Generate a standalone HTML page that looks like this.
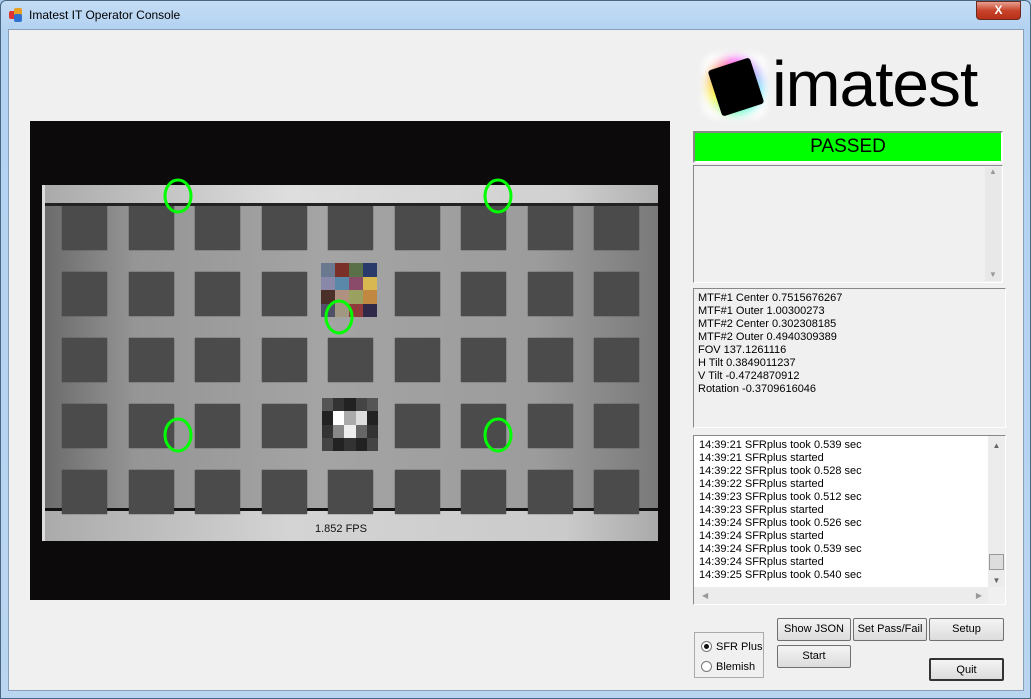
<!DOCTYPE html>
<html><head><meta charset="utf-8"><style>
*{box-sizing:border-box;margin:0;padding:0}
body{width:1031px;height:699px;overflow:hidden;background:#a9c9ea;font-family:"Liberation Sans",sans-serif;font-size:11px;position:relative}
.abs{position:absolute}
#frame{left:0;top:0;width:1031px;height:699px;border:1px solid #4a6680;border-radius:6px 6px 0 0;background:linear-gradient(#c4dcf4,#b2d2f2 30px,#b9d5f0)}
#client{left:8px;top:29px;width:1016px;height:662px;background:#f0f0f0;border:1px solid #8aa0b8}
.btn{position:absolute;background:linear-gradient(#f4f4f4,#dcdcdc);border:1px solid #707070;border-radius:2px;font-size:11px;text-align:center;line-height:21px;color:#000;white-space:nowrap}
.sq{background:#4b4b4b;width:45px;height:44px;box-shadow:0 0 1px #333}
.ln{height:13px;line-height:13px}
</style></head><body>
<div id="frame" class="abs"></div>
<div class="abs" style="left:9px;top:8px;width:14px;height:14px">
<div class="abs" style="left:0;top:3px;width:8px;height:8px;background:#d33;border-radius:2px"></div>
<div class="abs" style="left:5px;top:0;width:8px;height:8px;background:#e8a020;border-radius:2px"></div>
<div class="abs" style="left:5px;top:6px;width:8px;height:8px;background:#3070d0;border-radius:2px"></div></div>
<div class="abs" style="left:29px;top:8px;font-size:12px;color:#000">Imatest IT Operator Console</div>
<div class="abs" style="left:976px;top:1px;width:45px;height:19px;background:linear-gradient(#e8a090,#c8432a 50%,#b83018);border:1px solid #6a2a20;border-radius:0 0 4px 4px;color:#fff;font-weight:bold;text-align:center;line-height:17px;font-size:12px">X</div>
<div id="client" class="abs"></div>

<!-- camera image -->
<div class="abs" style="left:30px;top:121px;width:640px;height:479px;background:#0c0a0a;overflow:hidden">
 <div class="abs" style="left:12px;top:64px;width:616px;height:356px;background:linear-gradient(90deg,#6a6a6a,#959595 15%,#a4a4a4 45%,#9c9c9c 80%,#7a7a7a)"></div>
 <div class="abs" style="left:12px;top:64px;width:616px;height:20px;background:linear-gradient(90deg,#aaa,#dedede 40%,#d0d0d0 85%,#b0b0b0)"></div>
 <div class="abs" style="left:12px;top:82px;width:616px;height:3px;background:#222"></div>
 <div class="abs" style="left:12px;top:387px;width:616px;height:3px;background:#111"></div>
 <div class="abs" style="left:12px;top:390px;width:616px;height:30px;background:linear-gradient(90deg,#aaa,#d4d4d4 40%,#cacaca 85%,#aaa)"></div>
 <div class="abs" style="left:12px;top:64px;width:3px;height:356px;background:#ddd"></div>
 <div class="abs" style="left:32px;top:85px;display:grid;grid-template-columns:repeat(9,45px);grid-template-rows:repeat(5,44px);column-gap:21.5px;row-gap:22px">
  <div class="sq"></div><div class="sq"></div><div class="sq"></div><div class="sq"></div><div class="sq"></div><div class="sq"></div><div class="sq"></div><div class="sq"></div><div class="sq"></div>
  <div class="sq"></div><div class="sq"></div><div class="sq"></div><div class="sq"></div><div class="sq" style="background:none;box-shadow:none"></div><div class="sq"></div><div class="sq"></div><div class="sq"></div><div class="sq"></div>
  <div class="sq"></div><div class="sq"></div><div class="sq"></div><div class="sq"></div><div class="sq"></div><div class="sq"></div><div class="sq"></div><div class="sq"></div><div class="sq"></div>
  <div class="sq"></div><div class="sq"></div><div class="sq"></div><div class="sq"></div><div class="sq" style="background:none;box-shadow:none"></div><div class="sq"></div><div class="sq"></div><div class="sq"></div><div class="sq"></div>
  <div class="sq"></div><div class="sq"></div><div class="sq"></div><div class="sq"></div><div class="sq"></div><div class="sq"></div><div class="sq"></div><div class="sq"></div><div class="sq"></div>
 </div>
 <div class="abs" style="left:291px;top:142px;width:56px;height:54px;display:grid;grid-template-columns:repeat(4,1fr);grid-template-rows:repeat(4,1fr)">
  <div style="background:#6a7890"></div><div style="background:#7a3028"></div><div style="background:#5a7048"></div><div style="background:#2a3a6a"></div>
  <div style="background:#8a88a8"></div><div style="background:#5a88a8"></div><div style="background:#8a4a6a"></div><div style="background:#d8b850"></div>
  <div style="background:#4a3028"></div><div style="background:#b09080"></div><div style="background:#9aa060"></div><div style="background:#c08840"></div>
  <div style="background:#505068"></div><div style="background:#a09880"></div><div style="background:#903a3a"></div><div style="background:#302a48"></div>
 </div>
 <div class="abs" style="left:292px;top:277px;width:56px;height:53px;background:#222;display:grid;grid-template-columns:repeat(5,1fr);grid-template-rows:repeat(4,1fr)">
  <div style="background:#555"></div><div style="background:#333"></div><div style="background:#222"></div><div style="background:#444"></div><div style="background:#555"></div>
  <div style="background:#222"></div><div style="background:#fff"></div><div style="background:#aaa"></div><div style="background:#ddd"></div><div style="background:#222"></div>
  <div style="background:#333"></div><div style="background:#888"></div><div style="background:#eee"></div><div style="background:#666"></div><div style="background:#333"></div>
  <div style="background:#444"></div><div style="background:#222"></div><div style="background:#333"></div><div style="background:#222"></div><div style="background:#444"></div>
 </div>
 <svg class="abs" style="left:0;top:0" width="640" height="479"><g fill="none" stroke="#00ff00" stroke-width="3">
  <ellipse cx="148" cy="75" rx="13" ry="16"/><ellipse cx="468" cy="75" rx="13" ry="16"/><ellipse cx="309" cy="196" rx="13" ry="16"/><ellipse cx="148" cy="314" rx="13" ry="16"/><ellipse cx="468" cy="314" rx="13" ry="16"/></g></svg>
 <div class="abs" style="left:285px;top:402px;font-size:11px;color:#111">1.852 FPS</div>
</div>

<!-- logo -->
<div class="abs" style="left:702px;top:53px;width:66px;height:66px;border-radius:14px;background:radial-gradient(circle,#fff0 40%,#fff 72%),conic-gradient(#f0f,#88f,#0ff,#0f8,#ff0,#f80,#f0f);filter:blur(3px);opacity:.8"></div>
<div class="abs" style="left:714px;top:63px;width:44px;height:48px;background:#000;transform:rotate(-18deg);border-radius:3px"></div>
<div class="abs" style="left:772px;top:46px;font-size:64px;line-height:76px;color:#000;letter-spacing:-1px;transform:scaleX(1.03);transform-origin:left">imatest</div>

<div class="abs" style="left:693px;top:131px;width:310px;height:32px;border:2px solid #888;border-right-color:#fff;border-bottom-color:#fff;background:#00ff00;font-size:19px;text-align:center;line-height:28px">PASSED</div>
<div class="abs" style="left:693px;top:165px;width:310px;height:118px;border:1px solid #888;border-right-color:#fff;border-bottom-color:#fff;background:#f0f0f0"><div class="abs" style="right:1px;top:1px;width:16px;height:114px;background:#e8e8e8;color:#999;font-size:8px;text-align:center">▲<div style="position:absolute;bottom:2px;width:16px">▼</div></div></div>
<div class="abs" style="left:693px;top:288px;width:313px;height:140px;border:1px solid #888;border-right-color:#fff;border-bottom-color:#fff;background:#f0f0f0;padding:3px 4px;font-size:11px;color:#000">
<div class="ln">MTF#1 Center 0.7515676267</div><div class="ln">MTF#1 Outer 1.00300273</div><div class="ln">MTF#2 Center 0.302308185</div><div class="ln">MTF#2 Outer 0.4940309389</div><div class="ln">FOV 137.1261116</div><div class="ln">H Tilt 0.3849011237</div><div class="ln">V Tilt -0.4724870912</div><div class="ln">Rotation -0.3709616046</div></div>
<div class="abs" style="left:693px;top:435px;width:313px;height:170px;border:1px solid #888;border-right-color:#fff;border-bottom-color:#fff;background:#fff;padding:3px 5px;font-size:11px;color:#000">
<div class="ln">14:39:21 SFRplus took 0.539 sec</div><div class="ln">14:39:21 SFRplus started</div><div class="ln">14:39:22 SFRplus took 0.528 sec</div><div class="ln">14:39:22 SFRplus started</div><div class="ln">14:39:23 SFRplus took 0.512 sec</div><div class="ln">14:39:23 SFRplus started</div><div class="ln">14:39:24 SFRplus took 0.526 sec</div><div class="ln">14:39:24 SFRplus started</div><div class="ln">14:39:24 SFRplus took 0.539 sec</div><div class="ln">14:39:24 SFRplus started</div><div class="ln">14:39:25 SFRplus took 0.540 sec</div>
<div class="abs" style="right:0;top:0;width:17px;height:152px;background:#ececec;color:#666;font-size:8px;text-align:center;padding-top:5px">▲<div class="abs" style="left:1px;top:118px;width:15px;height:16px;background:#ddd;border:1px solid #999"></div><div class="abs" style="bottom:3px;width:17px">▼</div></div>
<div class="abs" style="left:0;bottom:0;width:294px;height:17px;background:#ececec;color:#999;font-size:8px;line-height:17px;padding-left:8px">◀<span style="position:absolute;right:6px">▶</span></div>
<div class="abs" style="right:0;bottom:0;width:17px;height:17px;background:#f0f0f0"></div></div>

<div class="btn" style="left:777px;top:618px;width:74px;height:23px">Show JSON</div>
<div class="btn" style="left:853px;top:618px;width:74px;height:23px">Set Pass/Fail</div>
<div class="btn" style="left:929px;top:618px;width:75px;height:23px">Setup</div>
<div class="btn" style="left:777px;top:645px;width:74px;height:23px">Start</div>
<div class="btn" style="left:929px;top:658px;width:75px;height:23px;border:2px solid #333">Quit</div>
<div class="abs" style="left:694px;top:632px;width:70px;height:46px;border:1px solid #aaa;font-size:11px;white-space:nowrap">
<div class="abs" style="left:6px;top:8px;width:11px;height:11px;border:1px solid #777;border-radius:50%;background:#fff"><div style="margin:2px;width:5px;height:5px;border-radius:50%;background:#111"></div></div>
<div class="abs" style="left:21px;top:8px">SFR Plus</div>
<div class="abs" style="left:6px;top:28px;width:11px;height:11px;border:1px solid #777;border-radius:50%;background:#fff"></div>
<div class="abs" style="left:21px;top:28px">Blemish</div></div>
</body></html>
